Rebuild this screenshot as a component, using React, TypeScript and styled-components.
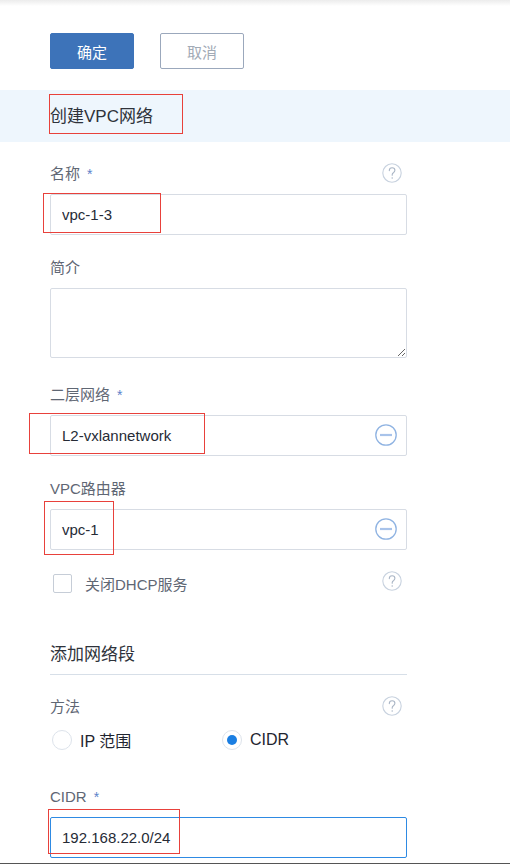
import React from "react";
import styled, { createGlobalStyle } from "styled-components";

const GlobalStyle = createGlobalStyle`
  html, body { margin: 0; padding: 0; background: #ffffff; }
  body { font-family: "Liberation Sans", "Noto Sans CJK SC", sans-serif; }
  * { box-sizing: border-box; }
`;

const CJK = `"Liberation Sans", "Noto Sans CJK SC", sans-serif`;

const Page = styled.div`
  width: 510px;
  height: 864px;
  border-bottom: 1px solid #555555;
  overflow: hidden;
  font-family: ${CJK};
`;

const TopShade = styled.div`
  height: 6px;
  background: linear-gradient(#ececec, #f7f7f7 60%, #ffffff);
`;

const ButtonBar = styled.div`
  display: flex;
  gap: 26px;
  padding: 27px 50px 0;
`;

const Button = styled.button<{ $primary?: boolean }>`
  width: 84px;
  height: 36px;
  border-radius: 2px;
  font-family: ${CJK};
  font-size: 15px;
  cursor: pointer;
  background: ${(p) => (p.$primary ? "#3d73b9" : "#ffffff")};
  color: ${(p) => (p.$primary ? "#ffffff" : "#a2aab6")};
  border: 1px solid ${(p) => (p.$primary ? "#3d73b9" : "#9ba8bc")};
`;

const HeaderBand = styled.div`
  margin-top: 21px;
  height: 52px;
  background: #eef6fd;
  padding-left: 50px;
  display: flex;
  align-items: center;
`;

const Title = styled.div`
  position: relative;
  font-size: 17px;
  color: #2f333b;
  line-height: 24px;
  margin-top: 1px;
`;

const Annotation = styled.div<{ $l: number; $t: number; $w: number; $h: number }>`
  position: absolute;
  left: ${(p) => p.$l}px;
  top: ${(p) => p.$t}px;
  width: ${(p) => p.$w}px;
  height: ${(p) => p.$h}px;
  border: 1px solid #e8413b;
  pointer-events: none;
`;

const Form = styled.div`
  width: 407px;
  padding: 21.5px 0 0 50px;
`;

const Field = styled.div<{ $gap?: number }>`
  margin-bottom: ${(p) => (p.$gap ?? 23)}px;
`;

const LabelRow = styled.div`
  height: 20px;
  margin-bottom: 10px;
  display: flex;
  align-items: center;
  justify-content: space-between;
`;

const Label = styled.span`
  font-size: 15px;
  color: #5f6774;
  line-height: 20px;
`;

const Required = styled.span`
  color: #5b82c9;
  margin-left: 7px;
  font-size: 14px;
`;

const Control = styled.div`
  position: relative;
`;

const TextInput = styled.input<{ $focus?: boolean }>`
  display: block;
  width: 100%;
  height: 41px;
  border: 1px solid ${(p) => (p.$focus ? "#2e8ae3" : "#d7dce4")};
  border-radius: 2px;
  padding: 0 11px;
  font-family: ${CJK};
  font-size: 15px;
  color: #262b36;
  background: #fff;
  outline: none;
`;

const TextArea = styled.textarea`
  display: block;
  width: 100%;
  height: 70px;
  border: 1px solid #d7dce4;
  border-radius: 2px;
  resize: vertical;
  font-family: ${CJK};
  font-size: 15px;
  outline: none;
`;

const SelectBox = styled.div`
  height: 41px;
  border: 1px solid #d7dce4;
  border-radius: 2px;
  padding: 0 9px 0 11px;
  display: flex;
  align-items: center;
  justify-content: space-between;
  font-size: 15px;
  color: #262b36;
`;

const CheckRow = styled.div`
  height: 20px;
  display: flex;
  align-items: center;
  justify-content: space-between;
`;

const CheckLabel = styled.label`
  display: flex;
  align-items: center;
  gap: 13px;
  font-size: 15px;
  color: #5f6774;
  margin-top: 1px;
`;

const Checkbox = styled.span`
  width: 19px;
  height: 19px;
  margin-left: 3px;
  border: 1px solid #c6cdd7;
  border-radius: 2px;
  background: #fff;
`;

const SectionTitle = styled.div`
  margin-top: 50.5px;
  height: 32px;
  line-height: 24px;
  padding-bottom: 7px;
  border-bottom: 1px solid #d7dfe8;
  font-size: 17px;
  color: #2f333b;
`;

const SectionBody = styled.div`
  padding-top: 21.7px;
`;

const RadioGroup = styled.div`
  height: 26px;
  display: grid;
  grid-template-columns: 170px 1fr;
  align-items: center;
  margin-bottom: 34.8px;
`;

const RadioOption = styled.label`
  display: flex;
  align-items: center;
  gap: 8px;
  font-size: 16px;
  color: #1f2530;
`;

const RadioCircle = styled.span<{ $checked?: boolean }>`
  width: 20px;
  height: 20px;
  margin-left: 2px;
  border-radius: 50%;
  border: 1px solid #dde3eb;
  background: #fff;
  display: flex;
  align-items: center;
  justify-content: center;
  &::after {
    content: "";
    display: ${(p) => (p.$checked ? "block" : "none")};
    width: 10px;
    height: 10px;
    border-radius: 50%;
    background: #1a7ee2;
  }
`;

const HelpWrap = styled.span<{ $dy?: number }>`
  display: flex;
  margin-right: 5px;
  margin-top: ${(p) => p.$dy ?? 0}px;
`;

const HelpIcon = ({ dy }: { dy?: number }) => (
  <HelpWrap $dy={dy}>
    <svg width="20" height="20" viewBox="0 0 20 20">
      <circle cx="10" cy="10" r="9.2" fill="none" stroke="#c8d2df" strokeWidth="1.1" />
      <path
        d="M7.3 7.6c0-1.7 1.2-2.8 2.8-2.8 1.6 0 2.8 1 2.8 2.5 0 1.2-0.7 1.8-1.5 2.4-0.8 0.5-1.2 1-1.2 2v0.6"
        fill="none"
        stroke="#a9b5c5"
        strokeWidth="1.1"
        strokeLinecap="round"
      />
      <circle cx="10.2" cy="15" r="0.75" fill="#a9b5c5" />
    </svg>
  </HelpWrap>
);

const MinusIcon = () => (
  <svg width="22" height="22" viewBox="0 0 22 22">
    <circle cx="11" cy="11" r="10.2" fill="none" stroke="#8fb3e2" strokeWidth="1.3" />
    <line x1="5" y1="11" x2="17" y2="11" stroke="#a8c3ea" strokeWidth="2.2" />
  </svg>
);

export default function App() {
  return (
    <Page>
      <GlobalStyle />
      <TopShade />
      <ButtonBar>
        <Button $primary>确定</Button>
        <Button>取消</Button>
      </ButtonBar>
      <HeaderBand>
        <Title>
          创建VPC网络
          <Annotation $l={-1} $t={-11} $w={134} $h={40} />
        </Title>
      </HeaderBand>
      <Form>
        <Field>
          <LabelRow>
            <Label>
              名称<Required>*</Required>
            </Label>
            <HelpIcon dy={-2} />
          </LabelRow>
          <Control>
            <TextInput defaultValue="vpc-1-3" readOnly />
            <Annotation $l={-7} $t={-1} $w={118} $h={40} />
          </Control>
        </Field>
        <Field $gap={27}>
          <LabelRow>
            <Label>简介</Label>
          </LabelRow>
          <TextArea />
        </Field>
        <Field>
          <LabelRow>
            <Label>
              二层网络<Required>*</Required>
            </Label>
          </LabelRow>
          <Control>
            <SelectBox>
              <span>L2-vxlannetwork</span>
              <MinusIcon />
            </SelectBox>
            <Annotation $l={-21} $t={-2} $w={176} $h={41} />
          </Control>
        </Field>
        <Field>
          <LabelRow>
            <Label>VPC路由器</Label>
          </LabelRow>
          <Control>
            <SelectBox>
              <span>vpc-1</span>
              <MinusIcon />
            </SelectBox>
            <Annotation $l={-6} $t={-8} $w={70} $h={54} />
          </Control>
        </Field>
        <CheckRow>
          <CheckLabel>
            <Checkbox />
            关闭DHCP服务
          </CheckLabel>
          <HelpIcon dy={-4} />
        </CheckRow>
        <SectionTitle>添加网络段</SectionTitle>
        <SectionBody>
          <LabelRow>
            <Label>方法</Label>
            <HelpIcon dy={-1} />
          </LabelRow>
          <RadioGroup>
            <RadioOption>
              <RadioCircle />
              IP 范围
            </RadioOption>
            <RadioOption>
              <RadioCircle $checked />
              CIDR
            </RadioOption>
          </RadioGroup>
          <LabelRow>
            <Label>
              CIDR<Required>*</Required>
            </Label>
          </LabelRow>
          <Control>
            <TextInput $focus defaultValue="192.168.22.0/24" readOnly />
            <Annotation $l={-2} $t={-8} $w={132} $h={45} />
          </Control>
        </SectionBody>
      </Form>
    </Page>
  );
}
